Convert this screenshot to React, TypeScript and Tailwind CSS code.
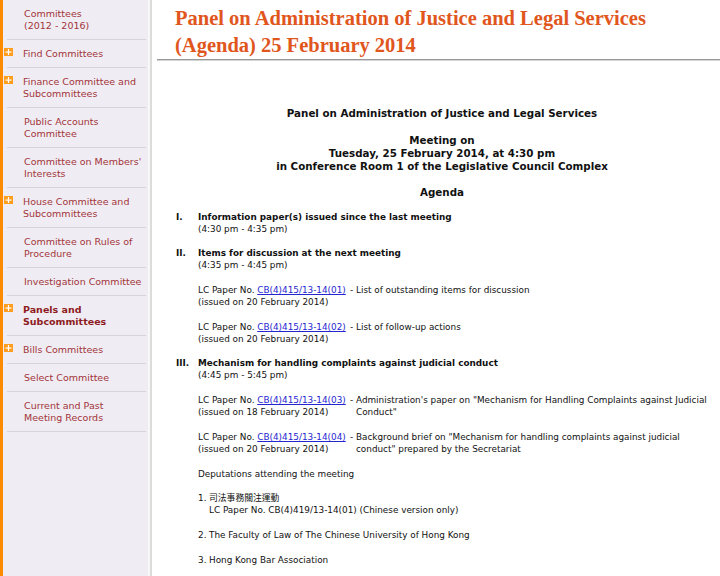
import React from "react";

type NavItem = { lines: string[]; plus?: boolean; bold?: boolean };

const nav: NavItem[] = [
  { lines: ["Committees", "(2012 - 2016)"] },
  { lines: ["Find Committees"], plus: true },
  { lines: ["Finance Committee and", "Subcommittees"], plus: true },
  { lines: ["Public Accounts", "Committee"] },
  { lines: ["Committee on Members'", "Interests"] },
  { lines: ["House Committee and", "Subcommittees"], plus: true },
  { lines: ["Committee on Rules of", "Procedure"] },
  { lines: ["Investigation Committee"] },
  { lines: ["Panels and", "Subcommittees"], plus: true, bold: true },
  { lines: ["Bills Committees"], plus: true },
  { lines: ["Select Committee"] },
  { lines: ["Current and Past", "Meeting Records"] },
];

function PlusBox() {
  return (
    <span className="absolute left-[1px] top-[8px] flex h-[8px] w-[9px] items-center justify-center bg-[#ff9d1e]">
      <svg width="7" height="6" viewBox="0 0 7 6">
        <rect x="0.5" y="2.5" width="6" height="1.2" fill="#fff" />
        <rect x="2.9" y="0" width="1.2" height="6" fill="#fff" />
      </svg>
    </span>
  );
}

function Sidebar() {
  return (
    <aside className="flex w-[148px] shrink-0 border-l-[3px] border-[#ff8c00] bg-[#efedf3]">
      <ul className="w-full">
        {nav.map((item, i) => (
          <li key={i}>
            <div
              className={
                "relative pb-[7px] pt-[8px] " + (item.plus ? "pl-[20px]" : "pl-[21px]")
              }
            >
              {item.plus && <PlusBox />}
              <a
                className={
                  "block text-[9.5px] leading-[12px] " +
                  (item.bold ? "font-bold text-[#8e1b22]" : "text-[#a3343a]")
                }
              >
                {item.lines.map((l, j) => (
                  <span key={j} className="block whitespace-nowrap">
                    {l}
                  </span>
                ))}
              </a>
            </div>
            <div className="ml-[4px] mr-[2px] h-px bg-[#d6d3dc]" />
          </li>
        ))}
      </ul>
    </aside>
  );
}

function Link({ children }: { children: React.ReactNode }) {
  return <a className="text-[#2626d0] underline">{children}</a>;
}

function PaperRow({
  no,
  issued,
  desc,
}: {
  no: string;
  issued: string;
  desc: React.ReactNode;
}) {
  return (
    <div className="mt-[12.7px] grid grid-cols-[152px_6px_1fr] pl-[34px] pr-[8px]">
      <div className="whitespace-nowrap">
        LC Paper No. <Link>{no}</Link>
        <br />
        (issued on {issued})
      </div>
      <div>-</div>
      <div>{desc}</div>
    </div>
  );
}

function Item({ num, title, time }: { num: string; title: string; time: string }) {
  return (
    <div className="mt-[12.7px] flex pl-[12px]">
      <span className="w-[22px] shrink-0 font-bold">{num}</span>
      <div>
        <div className="font-bold">{title}</div>
        <div>{time}</div>
      </div>
    </div>
  );
}

export default function App() {
  return (
    <div className="flex h-[576px] w-[720px] overflow-hidden bg-white font-['DejaVu_Sans','Noto_Sans_CJK_TC',sans-serif]">
      <Sidebar />
      <div className="w-[2px] shrink-0 bg-[#f7f7f7]" />
      <div className="w-[2px] shrink-0 bg-[#dcdcdc]" />
      <main className="min-w-0 flex-1 pl-[5px]">
        <h1 className="pl-[18px] pt-[5px] font-['Liberation_Serif',serif] text-[20.5px] font-bold leading-[27px] text-[#e0561d]">
          Panel on Administration of Justice and Legal Services
          <br />
          (Agenda) 25 February 2014
        </h1>
        <div className="h-[2px] border-t border-[#999] bg-[#d4d4d4]" />

        <div className="ml-[7px] text-[8.85px] leading-[12px] text-[#111]">
          <div className="mt-[46px] text-center text-[10.3px] font-bold leading-[13px]">
            <p>Panel on Administration of Justice and Legal Services</p>
            <p className="mt-[14px]">Meeting on</p>
            <p>Tuesday, 25 February 2014, at 4:30 pm</p>
            <p>in Conference Room 1 of the Legislative Council Complex</p>
            <p className="mt-[13px]">Agenda</p>
          </div>

          <div className="-mt-[1px]">
            <Item
              num="I."
              title="Information paper(s) issued since the last meeting"
              time="(4:30 pm - 4:35 pm)"
            />
            <Item
              num="II."
              title="Items for discussion at the next meeting"
              time="(4:35 pm - 4:45 pm)"
            />
            <PaperRow
              no="CB(4)415/13-14(01)"
              issued="20 February 2014"
              desc="List of outstanding items for discussion"
            />
            <PaperRow
              no="CB(4)415/13-14(02)"
              issued="20 February 2014"
              desc="List of follow-up actions"
            />
            <Item
              num="III."
              title="Mechanism for handling complaints against judicial conduct"
              time="(4:45 pm - 5:45 pm)"
            />
            <PaperRow
              no="CB(4)415/13-14(03)"
              issued="18 February 2014"
              desc={'Administration\'s paper on "Mechanism for Handling Complaints against Judicial Conduct"'}
            />
            <PaperRow
              no="CB(4)415/13-14(04)"
              issued="20 February 2014"
              desc={'Background brief on "Mechanism for handling complaints against judicial conduct" prepared by the Secretariat'}
            />

            <p className="mt-[12.7px] pl-[34px]">Deputations attending the meeting</p>
            <ol className="pl-[34px]">
              <li className="mt-[12.7px] flex">
                <span className="w-[11px] shrink-0">1.</span>
                <div>
                  <div className="text-[8.8px]">司法事務關注運動</div>
                  <div>LC Paper No. CB(4)419/13-14(01) (Chinese version only)</div>
                </div>
              </li>
              <li className="mt-[12.7px] flex">
                <span className="w-[11px] shrink-0">2.</span>
                <div>The Faculty of Law of The Chinese University of Hong Kong</div>
              </li>
              <li className="mt-[12.7px] flex">
                <span className="w-[11px] shrink-0">3.</span>
                <div>Hong Kong Bar Association</div>
              </li>
            </ol>
          </div>
        </div>
      </main>
    </div>
  );
}
